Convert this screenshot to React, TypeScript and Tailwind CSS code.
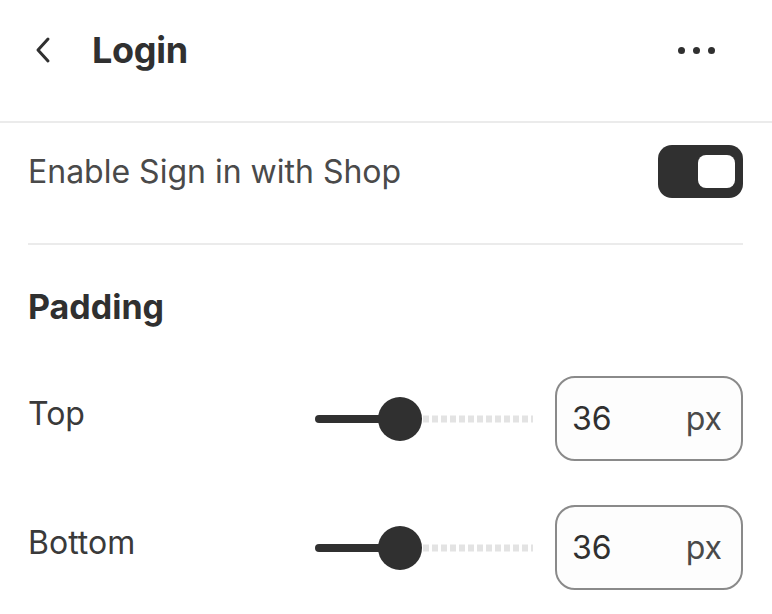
import React, { useState } from 'react';

const font = { fontFamily: 'Inter, "Liberation Sans", sans-serif' };

function SliderTrack({ value }: { value: number }) {
  // knob sits at the fixed position seen in the editor
  const w = 219;
  const x = 85 + 0 * value;
  return (
    <svg width={w} height={48} viewBox={`0 0 ${w} 48`} className="block">
      <line x1={108} y1={24} x2={218} y2={24} stroke="#e3e3e3" strokeWidth={7} strokeDasharray="6 3" />
      <line x1={4} y1={24} x2={x} y2={24} stroke="#303030" strokeWidth={8} strokeLinecap="round" />
      <circle cx={x} cy={24} r={22} fill="#303030" />
    </svg>
  );
}

function PaddingRow({ label, value }: { label: string; value: number }) {
  return (
    <div className="flex items-center">
      <div className="w-[287px] pb-[10px] text-[32px] text-[#3a3a3a]">{label}</div>
      <SliderTrack value={value / 100} />
      <div className="ml-[21px] flex h-[85px] w-[188px] items-center justify-between rounded-[20px] border-2 border-[#8a8a8a] bg-[#fdfdfd] pl-[15px] pr-[19px] text-[32px] text-[#303030]">
        <span>{value}</span>
        <span className="text-[#4a4a4a]">px</span>
      </div>
    </div>
  );
}

export default function App() {
  const [enabled, setEnabled] = useState(true);

  return (
    <div className="h-[614px] w-[772px] overflow-hidden bg-white" style={font}>
      {/* Header */}
      <div className="h-[123px] border-b-2 border-[#ebebeb]">
        <div className="flex h-[100px] items-center justify-between pl-[33px] pr-[57px]">
          <div className="flex items-center">
            <svg width="20" height="30" viewBox="0 0 20 30" fill="none">
              <path d="M15 4 L5 15 L15 26" stroke="#303030" strokeWidth="3" strokeLinecap="round" strokeLinejoin="round" />
            </svg>
            <span className="ml-[39px] text-[36px] font-bold tracking-[-0.3px] text-[#303030]">Login</span>
          </div>
          <div className="flex items-center gap-[8px]">
            <span className="h-[7px] w-[7px] rounded-full bg-[#303030]" />
            <span className="h-[7px] w-[7px] rounded-full bg-[#303030]" />
            <span className="h-[7px] w-[7px] rounded-full bg-[#303030]" />
          </div>
        </div>
      </div>

      <div className="pl-[28px] pr-[29px]">
        {/* Toggle row */}
        <div className="flex items-center justify-between border-b-2 border-[#ebebeb] pb-[45px] pt-[22px]">
          <span className="text-[32px] text-[#4a4a4a]">Enable Sign in with Shop</span>
          <button
            onClick={() => setEnabled(!enabled)}
            className="flex h-[53px] w-[85px] items-center justify-end rounded-[14px] bg-[#303030] pr-[8px]"
          >
            <span className="h-[33px] w-[37px] rounded-[8px] bg-white" />
          </button>
        </div>

        {/* Padding */}
        <div className="pt-[36px] text-[34px] font-bold text-[#303030]">Padding</div>
        <div className="mt-[44px] flex flex-col gap-[44px]">
          <PaddingRow label="Top" value={36} />
          <PaddingRow label="Bottom" value={36} />
        </div>
      </div>
    </div>
  );
}
